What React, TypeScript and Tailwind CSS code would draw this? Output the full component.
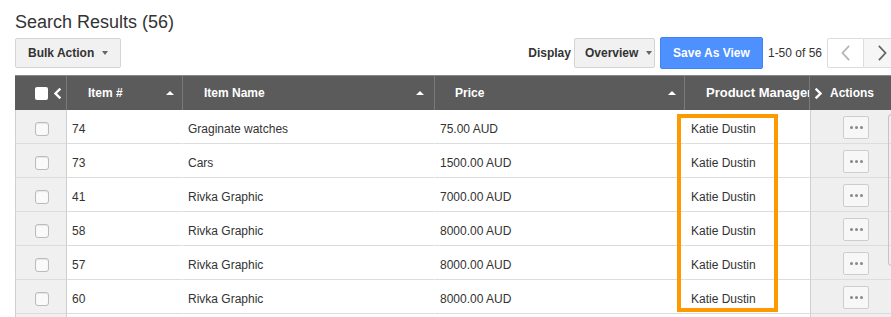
const rows = [
  { id: '74', name: 'Graginate watches', price: '75.00', pm: 'Katie Dustin' },
  { id: '73', name: 'Cars', price: '1500.00', pm: 'Katie Dustin' },
  { id: '41', name: 'Rivka Graphic', price: '7000.00', pm: 'Katie Dustin' },
  { id: '58', name: 'Rivka Graphic', price: '8000.00', pm: 'Katie Dustin' },
  { id: '57', name: 'Rivka Graphic', price: '8000.00', pm: 'Katie Dustin' },
  { id: '60', name: 'Rivka Graphic', price: '8000.00', pm: 'Katie Dustin' },
  { id: '59', name: 'Rivka Graphic', price: '8000.00', pm: 'Katie Dustin' },
];

function Caret() {
  return <span className="inline-block w-0 h-0 border-x-[3.5px] border-x-transparent border-t-[4px] border-t-[#666]" />;
}

function SortUp() {
  return <span className="inline-block w-0 h-0 border-x-[4px] border-x-transparent border-b-[4px] border-b-white" />;
}

function Chevron({ dir, w, h, color, stroke }: { dir: 'l' | 'r'; w: number; h: number; color: string; stroke: number }) {
  const pts = dir === 'l' ? `${w - 1.5},1.5 1.5,${h / 2} ${w - 1.5},${h - 1.5}` : `1.5,1.5 ${w - 1.5},${h / 2} 1.5,${h - 1.5}`;
  return (
    <svg width={w} height={h} viewBox={`0 0 ${w} ${h}`} className="block">
      <polyline points={pts} fill="none" stroke={color} strokeWidth={stroke} strokeLinecap="square" strokeLinejoin="miter" />
    </svg>
  );
}

function Checkbox() {
  return <span className="block w-[14px] h-[14px] rounded-[3px] border border-[#bbb] bg-[#fafafa] shadow-[inset_0_1px_1px_rgba(0,0,0,.08)]" />;
}

export default function App() {
  return (
    <div className="w-[891px] h-[317px] overflow-hidden bg-white font-['Liberation_Sans',Arial,sans-serif] text-[#333]">
      <div className="w-[886px] ml-[15px]">
        <h1 className="mt-[11px] text-[18px] leading-[22px] font-normal text-[#333]">Search Results (56)</h1>

        <div className="mt-[4px] flex items-center h-[31px]">
          <button className="h-[30px] w-[106px] flex items-center gap-[8px] pl-[12px] bg-[#f1f1f1] border border-[#d4d4d4] rounded-[2px] text-[12px] font-bold text-[#333]">
            Bulk Action <Caret />
          </button>

          <div className="ml-auto flex items-center">
            <span className="text-[12px] font-bold mr-[3px]">Display</span>
            <button className="h-[30px] w-[81px] flex items-center gap-[8px] pl-[10px] bg-[#f1f1f1] border border-[#d4d4d4] rounded-[2px] text-[12px] font-bold text-[#333]">
              Overview <Caret />
            </button>
            <button className="ml-[5px] h-[32px] w-[103px] bg-[#4d90fe] border border-[#3f84f4] rounded-[2px] text-[12px] font-bold text-white">
              Save As View
            </button>
            <span className="ml-[5px] text-[12px]">1-50 of 56</span>
            <div className="ml-[5px] flex">
              <button className="h-[30px] w-[37px] flex items-center justify-center bg-white border border-[#dcdcdc] rounded-l-[2px]">
                <Chevron dir="l" w={9} h={16} color="#b5b5b5" stroke={1.8} />
              </button>
              <button className="h-[30px] w-[37px] flex items-center justify-center bg-[#f6f6f6] border border-l-0 border-[#dcdcdc]">
                <Chevron dir="r" w={9} h={16} color="#666" stroke={1.8} />
              </button>
            </div>
          </div>
        </div>

        <div className="relative mt-[7px]">
          <table className="table-fixed border-separate border-spacing-0 w-[886px] text-[12px]">
            <colgroup>
              <col className="w-[52px]" />
              <col className="w-[116px]" />
              <col className="w-[252px]" />
              <col className="w-[250px]" />
              <col className="w-[125px]" />
              <col className="w-[91px]" />
            </colgroup>
            <thead>
              <tr className="h-[35px] bg-[#5b5b5b] text-white font-bold">
                <th className="border-t border-t-[#8a8a8a] border-r border-r-[#7a7a7a] p-0">
                  <div className="flex items-center pl-[20px] gap-[6px]">
                    <span className="block w-[13px] h-[13px] rounded-[2px] bg-white" />
                    <Chevron dir="l" w={7} h={11} color="#fff" stroke={2.4} />
                  </div>
                </th>
                <th className="border-t border-t-[#8a8a8a] border-r border-r-[#7a7a7a] p-0 text-left font-bold">
                  <div className="flex items-center pl-[21px] pr-[8px]">
                    <span>Item #</span>
                    <span className="ml-auto flex"><SortUp /></span>
                  </div>
                </th>
                <th className="border-t border-t-[#8a8a8a] border-r border-r-[#7a7a7a] p-0 text-left font-bold">
                  <div className="flex items-center pl-[21px] pr-[10px]">
                    <span>Item Name</span>
                    <span className="ml-auto flex"><SortUp /></span>
                  </div>
                </th>
                <th className="border-t border-t-[#8a8a8a] border-r border-r-[#7a7a7a] p-0 text-left font-bold">
                  <div className="flex items-center pl-[20px] pr-[8px]">
                    <span>Price</span>
                    <span className="ml-auto flex"><SortUp /></span>
                  </div>
                </th>
                <th className="border-t border-t-[#8a8a8a] border-r border-r-[#7a7a7a] p-0 text-left font-bold overflow-hidden">
                  <div className="pl-[21px] whitespace-nowrap overflow-hidden text-[13px]">Product Manager</div>
                </th>
                <th className="border-t border-t-[#8a8a8a] p-0 text-left font-bold">
                  <div className="flex items-center pl-[5px] gap-[8px]">
                    <Chevron dir="r" w={7} h={11} color="#fff" stroke={2.4} />
                    <span>Actions</span>
                  </div>
                </th>
              </tr>
            </thead>
            <tbody>
              {rows.map((r, i) => (
                <tr key={i} className="h-[34px]">
                  <td className="bg-[#f0f0f0] border-l border-l-[#cfcfcf] border-r border-r-[#cfcfcf] border-b border-b-[#dcdcdc] p-0 pt-[4px]">
                    <div className="flex justify-center pl-[1px]"><Checkbox /></div>
                  </td>
                  <td className="border-b border-b-[#dcdcdc] border-r border-r-white pl-[5px] pt-[4px]">{r.id}</td>
                  <td className="border-b border-b-[#dcdcdc] border-r border-r-white pl-[5px] pt-[4px]">{r.name}</td>
                  <td className="border-b border-b-[#dcdcdc] border-r border-r-white pl-[5px] pt-[4px]">{r.price} AUD</td>
                  <td className="border-b border-b-[#dcdcdc] pl-[6px] pt-[4px]">{r.pm}</td>
                  <td className="bg-[#efefef] border-l border-l-[#cfcfcf] border-b border-b-[#dcdcdc] p-0 pt-[1px]">
                    <div className="flex justify-center">
                      <button className="w-[26px] h-[23px] flex items-center justify-center gap-[2px] bg-[#f7f7f7] border border-[#cdcdcd] rounded-[2px]">
                        <span className="w-[3px] h-[3px] rounded-full bg-[#888]" />
                        <span className="w-[3px] h-[3px] rounded-full bg-[#888]" />
                        <span className="w-[3px] h-[3px] rounded-full bg-[#888]" />
                      </button>
                    </div>
                  </td>
                </tr>
              ))}
            </tbody>
          </table>

          <div className="absolute left-[662px] top-[39px] w-[101px] h-[198px] border-4 border-[#ff9900] pointer-events-none" />
          <div className="absolute left-[873px] top-[39px] w-[8px] h-[152px] border-l border-t border-b border-[#c4c4c4] rounded-l-[4px] pointer-events-none" />
        </div>
      </div>
    </div>
  );
}
